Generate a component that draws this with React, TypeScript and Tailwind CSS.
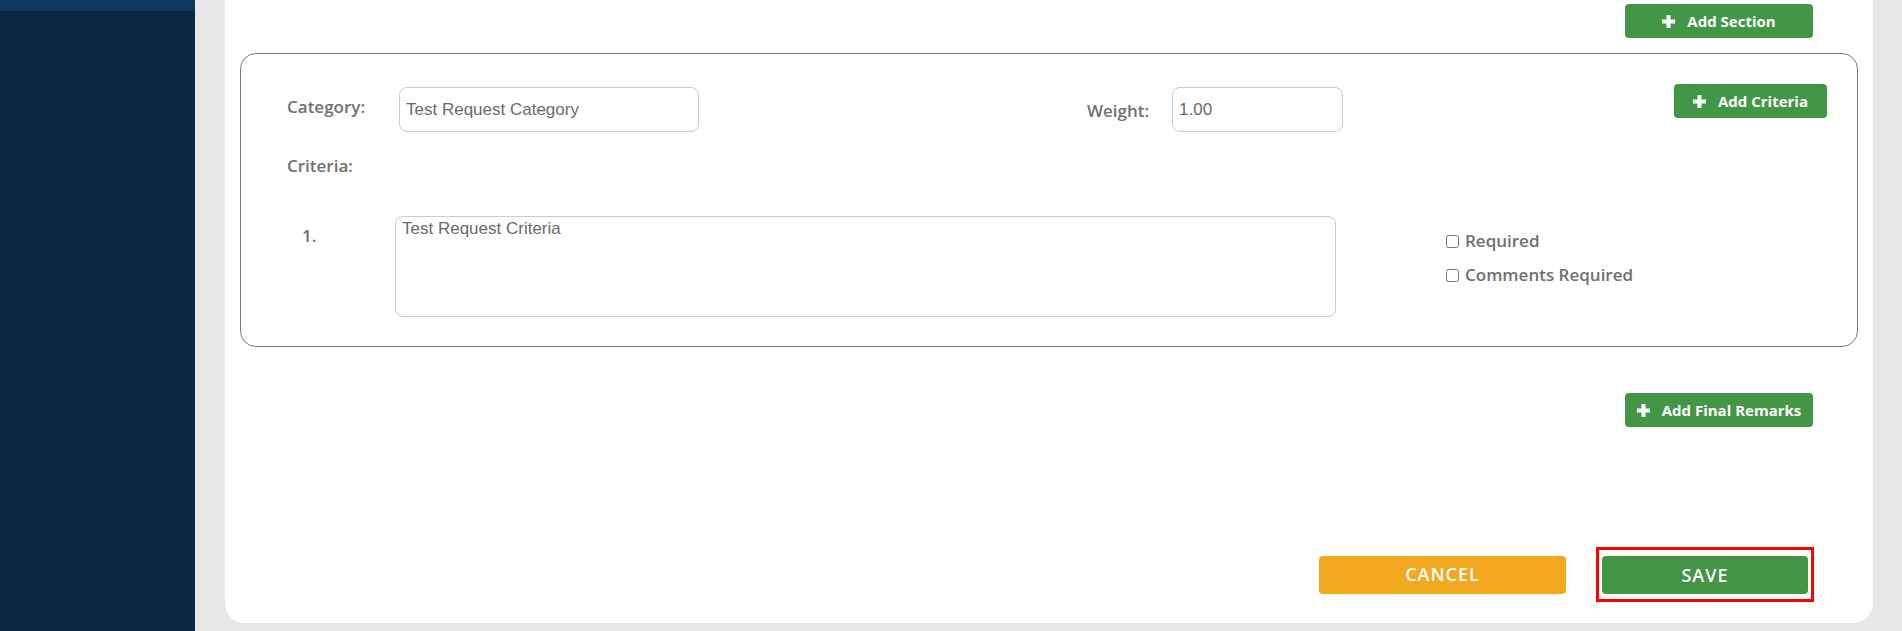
import React from 'react';

const labelFont = { fontFamily: '"Open Sans", Lato, "Noto Sans", sans-serif' };
const inputFont = { fontFamily: '"Liberation Sans", Arial, sans-serif' };

// Bold white plus used on the green buttons
const PlusIcon: React.FC = () => (
    <svg width="13" height="13" viewBox="0 0 13 13" className="shrink-0">
        <rect x="4.5" y="0" width="4" height="13" fill="#fff" />
        <rect x="0" y="4.5" width="13" height="4" fill="#fff" />
    </svg>
);

const GreenButton: React.FC<{ label: string; width: string }> = ({ label, width }) => (
    <button
        className={`${width} h-[34px] rounded-[4px] bg-[#439645] text-white text-[15px] font-bold flex items-center justify-center gap-[12px]`}
        style={labelFont}
    >
        <PlusIcon />
        <span>{label}</span>
    </button>
);

export default function App() {
    return (
        <div className="flex w-[1902px] h-[631px] overflow-hidden" style={labelFont}>
            {/* Sidebar */}
            <aside className="w-[195px] shrink-0 bg-[#0a2744] flex flex-col">
                <div className="h-[11px] bg-[#10365b]" />
            </aside>

            {/* Main area */}
            <main className="flex-1 min-w-0 bg-[#e7e7e7] pl-[30px] pr-[29px] pb-[8px] flex flex-col">
                <div className="flex-1 bg-white rounded-b-[20px] px-[15px] pt-[4px] pb-[21px] flex flex-col">
                    <div className="flex justify-end pr-[45px]">
                        <GreenButton label="Add Section" width="w-[188px]" />
                    </div>

                    {/* Section box */}
                    <div className="mt-[15px] border border-[#7a7a7a] rounded-[16px] pt-[30px] pb-[29px]">
                        <div className="flex items-start h-[48px]">
                            <div className="ml-[46px] w-[112px] h-[39px] mt-[3px] flex items-center text-[17px] font-semibold text-[#707070]">
                                Category:
                            </div>
                            <input
                                readOnly
                                value="Test Request Category"
                                className="w-[300px] h-[45px] mt-[3px] rounded-[8px] border border-[#cccccc] px-[6px] text-[17px] text-[#6b6b6b] outline-none"
                                style={inputFont}
                            />
                            <div className="ml-[388px] w-[85px] h-[45px] mt-[4px] flex items-center text-[17px] font-semibold text-[#707070]">
                                Weight:
                            </div>
                            <input
                                readOnly
                                value="1.00"
                                className="w-[171px] h-[45px] mt-[3px] rounded-[8px] border border-[#cccccc] px-[6px] text-[17px] text-[#6b6b6b] outline-none"
                                style={inputFont}
                            />
                            <div className="ml-auto mr-[30px]">
                                <GreenButton label="Add Criteria" width="w-[153px]" />
                            </div>
                        </div>

                        <div className="ml-[46px] mt-[24px] h-[20px] leading-[20px] text-[17px] font-semibold text-[#707070]">
                            Criteria:
                        </div>

                        <div className="flex items-start mt-[40px]">
                            <div className="ml-[61px] w-[93px] h-[40px] flex items-center text-[17px] font-semibold text-[#707070]">
                                1.
                            </div>
                            <textarea
                                readOnly
                                value="Test Request Criteria"
                                className="w-[941px] h-[101px] rounded-[8px] border border-[#cccccc] px-[6px] pt-[2px] pb-[3px] text-[17px] leading-[20px] text-[#6b6b6b] resize-none outline-none"
                                style={inputFont}
                            />
                            <div className="ml-[110px] mt-[14px] flex flex-col gap-[12px]">
                                {['Required', 'Comments Required'].map((item) => (
                                    <label key={item} className="h-[22px] flex items-center gap-[6px] text-[17px] font-semibold text-[#707070]">
                                        <input type="checkbox" className="w-[13px] h-[13px] m-0" />
                                        {item}
                                    </label>
                                ))}
                            </div>
                        </div>
                    </div>

                    <div className="flex justify-end pr-[45px] mt-[46px]">
                        <GreenButton label="Add Final Remarks" width="w-[188px]" />
                    </div>

                    {/* Footer actions */}
                    <div className="mt-auto flex justify-end items-center pr-[44px]">
                        <button className="w-[247px] h-[38px] rounded-[4px] bg-[#f4a81f] text-white text-[18px] font-semibold tracking-[1px]">
                            CANCEL
                        </button>
                        <div className="ml-[30px] border-[3px] border-[#ff0000] pt-[6px] pb-[5px] px-[3px]">
                            <button className="w-[206px] h-[38px] rounded-[4px] bg-[#439645] text-white text-[18px] font-semibold tracking-[1px]">
                                SAVE
                            </button>
                        </div>
                    </div>
                </div>
            </main>
        </div>
    );
}
